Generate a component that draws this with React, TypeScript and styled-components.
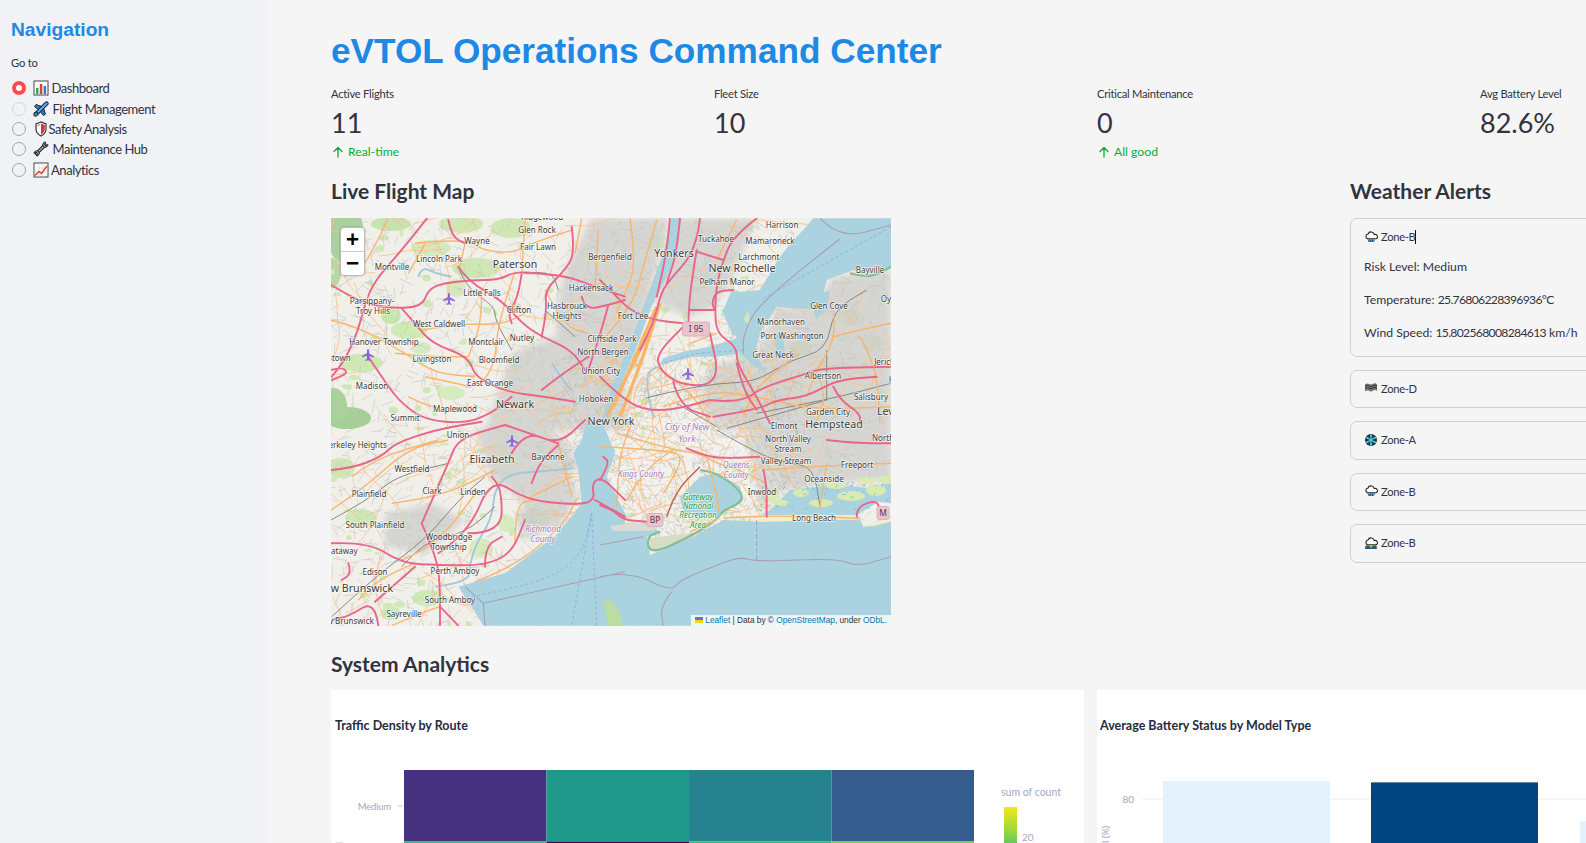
import React from "react";
import styled, { createGlobalStyle } from "styled-components";

const SANS = `"Lato", "Noto Sans", sans-serif`;
const ARIAL = `"Liberation Sans", Arial, sans-serif`;
const MAPF = `"Noto Sans", "Open Sans", sans-serif`;

const Global = createGlobalStyle`
  html, body { margin: 0; padding: 0; width: 1586px; height: 843px; overflow: hidden; background: #f5f5f5; }
  #root { width: 1586px; height: 843px; overflow: hidden; }
  * { box-sizing: border-box; }
`;

const Page = styled.div`
  display: flex; width: 1586px; height: 843px; overflow: hidden;
  font-family: ${SANS}; color: #31333f; background: #f5f5f5;
`;
const Sidebar = styled.aside`
  flex: 0 0 268px; background: #f0f2f6; padding: 19px 11px 0;
`;
const NavTitle = styled.h2`
  margin: 0; font: bold 19.2px/22px ${ARIAL}; color: #1e88e5;
`;
const GoTo = styled.div`
  margin-top: 15px; font-size: 11.2px; letter-spacing: -0.2px; line-height: 14px;
`;
const RadioList = styled.div`
  display: flex; flex-direction: column; margin-top: 8px;
`;
const RadioRow = styled.div`
  display: flex; align-items: center; height: 20.4px; font-size: 13px; letter-spacing: -0.45px; white-space: nowrap;
`;
const RadioDot = styled.span<{ $on?: boolean; $faint?: boolean }>`
  width: 14px; height: 14px; border-radius: 50%; flex: none; margin: 0 8px 0 1px;
  ${(p) => p.$on ? "background:#fff; border:4px solid #ff4b4b;" : `background:#f0f2f6; border:1px solid ${p.$faint ? "#d4d6dc" : "#a3a5ad"};`}
`;
const RadioIcon = styled.svg<{ $gap: number }>`
  width: 16px; height: 16px; flex: none; margin-left: -1px; margin-right: ${(p) => p.$gap}px;
`;
const Main = styled.main`
  flex: 1; min-width: 0; padding: 29px 0 0 63px; overflow: hidden;
`;
const Title = styled.h1`
  margin: 0; font: bold 35.2px/44px ${ARIAL}; color: #1e88e5; white-space: nowrap;
`;
const Metrics = styled.div`
  display: grid; grid-template-columns: repeat(4, 370px); column-gap: 13px; margin-top: 13px; width: 1519px;
`;
const Metric = styled.div`
  display: flex; flex-direction: column; height: 78px;
`;
const MetricLabel = styled.div`
  font-size: 11.2px; letter-spacing: -0.25px; line-height: 16px;
`;
const MetricValue = styled.div`
  font-size: 27px; line-height: 36px; margin-top: 3px;
`;
const Delta = styled.div`
  display: flex; align-items: center; gap: 3px; font-size: 12.2px; line-height: 18px; margin-top: 2px; color: #09ab3b;
`;
const MapRow = styled.div`
  display: grid; grid-template-columns: 1006px 400px; column-gap: 13px; margin-top: 12px; width: 1419px;
`;
const Section = styled.h3`
  margin: 0; font-size: 21px; line-height: 30px; font-weight: 700; color: #31333f; white-space: nowrap;
`;
const MapFrame = styled.div`
  position: relative; width: 560px; height: 408px; margin-top: 12px; overflow: hidden; background: #f2efe9;
`;
const MapSvg = styled.svg`
  display: block; width: 560px; height: 408px;
`;
const ZoomBox = styled.div`
  position: absolute; left: 9px; top: 9px; width: 25px; display: flex; flex-direction: column;
  background: #fff; border: 1px solid #bbb; border-radius: 4px; box-shadow: 0 0 0 1px rgba(0,0,0,.08);
`;
const ZoomBtn = styled.div<{ $top?: boolean }>`
  height: 23.5px; display: flex; align-items: center; justify-content: center;
  font: bold 21px/24px "DejaVu Sans Mono", "Liberation Mono", monospace; color: #000;
  ${(p) => p.$top && "border-bottom: 1px solid #ccc;"}
`;
const Attribution = styled.div`
  position: absolute; right: 0; bottom: 0; height: 11px; padding: 0 4px;
  background: rgba(255,255,255,.8); font: 8.3px/11px ${ARIAL}; color: #333; white-space: nowrap;
`;
const AttrLink = styled.span`
  color: #0078a8;
`;
const Flag = styled.svg`
  display: inline-block; width: 8px; height: 6px; margin-right: 2px;
`;
const Alerts = styled.div`
  display: flex; flex-direction: column; gap: 13px; margin-top: 12px;
`;
const Expander = styled.div`
  border: 1px solid #d0d0d3; border-radius: 7px; padding: 0 13px;
`;
const ExpHead = styled.div`
  display: flex; align-items: center; height: 36.5px; padding-bottom: 1px; font-size: 11.2px; letter-spacing: -0.3px; white-space: nowrap;
`;
const ExpIcon = styled.svg`
  width: 14px; height: 14px; flex: none; margin-right: 3px;
`;
const Caret = styled.span`
  display: inline-block; width: 1px; height: 14px; background: #111; margin-left: -1px;
`;
const ExpBody = styled.div`
  display: flex; flex-direction: column; padding: 0 0 6px; margin-top: -6px;
`;
const ExpLine = styled.div`
  font-size: 12.2px; line-height: 33.4px; white-space: nowrap;
`;
const Digits = styled.span`
  letter-spacing: -0.7px;
`;
const SystemHead = styled(Section)`
  margin-top: 23px;
`;
const Charts = styled.div`
  display: grid; grid-template-columns: repeat(2, 753px); column-gap: 13px; margin-top: 11px; width: 1519px;
`;
const ChartCard = styled.div`
  position: relative; background: #fff; height: 300px; overflow: hidden;
`;
const ChartTitle = styled.div<{ $x: number }>`
  position: absolute; left: ${(p) => p.$x}px; top: 27px; font-size: 12.5px; line-height: 18px; font-weight: 700; color: #262b3d; white-space: nowrap;
`;
const ChartSvg = styled.svg`
  display: block; position: absolute; left: 0; top: 0; width: 753px; height: 300px;
`;

/* ---------- map data, traced per quadrant of the reference ---------- */
const Q: Record<string, [number, number]> = { a: [-6, -8], b: [269, -8], c: [269, 202], d: [-6, 202] };
const xy = (k: string, a: number[]) => {
  const [ox, oy] = Q[k];
  const out: Array<[number, number]> = [];
  for (let i = 0; i < a.length; i += 2) out.push([a[i] / 3 + ox, a[i + 1] / 3 + oy]);
  return out;
};
const pts = (k: string, a: number[]) => xy(k, a).map(([x, y]) => `${x.toFixed(1)},${y.toFixed(1)}`).join(" ");
const smoothList = (p: Array<[number, number]>) => {
  if (p.length < 3) return `M${p.map(([x, y]) => `${x.toFixed(1)} ${y.toFixed(1)}`).join("L")}`;
  let d = `M${p[0][0].toFixed(1)} ${p[0][1].toFixed(1)}`;
  for (let i = 1; i < p.length - 1; i++) {
    const mx = (p[i][0] + p[i + 1][0]) / 2;
    const my = (p[i][1] + p[i + 1][1]) / 2;
    d += `Q${p[i][0].toFixed(1)} ${p[i][1].toFixed(1)} ${mx.toFixed(1)} ${my.toFixed(1)}`;
  }
  const l = p[p.length - 1];
  return d + `L${l[0].toFixed(1)} ${l[1].toFixed(1)}`;
};
type Line = [string, number[]];
const joined = (ls: Line[]) => ls.map(([k, a]) => smoothList(xy(k, a))).join("");

const pink: Line[] = [
  ["a", [18,225,70,255,120,280,200,295,290,290,310,240,350,220,440,210,520,210,570,185,640,190,730,200,810,230,900,260]],
  ["a", [310,20,240,110,150,210,120,280,100,360,60,450,20,500]],
  ["a", [230,295,270,340,320,400,430,440,450,500,540,545,660,560,750,575]],
  ["a", [400,170,430,215,530,270,590,340,650,380,740,420,780,480]],
  ["a", [130,440,190,530,230,580,300,630,420,640,500,610,560,560]],
  ["a", [370,30,380,80,420,100]],
  ["a", [740,50,750,130,720,180,660,240,665,300,650,380]],
  ["a", [590,190,580,260,550,310,560,340]],
  ["a", [770,260,780,300,850,285,900,270]],
  ["a", [850,285,830,360,790,480]],
  ["a", [650,540,700,500,790,440]],
  ["a", [18,480,50,470,70,490,20,510]],
  ["b", [300,25,290,120,200,220,180,260,160,340,120,420]],
  ["b", [470,25,400,80,370,150,350,220,345,300,350,370,410,410,410,460,470,560,510,640]],
  ["b", [290,125,370,150]],
  ["b", [400,240,350,240,335,280,345,300]],
  ["b", [270,300,345,300]],
  ["b", [290,120,270,240,265,340]],
  ["b", [0,210,50,260,90,300,160,330,250,340]],
  ["b", [330,370,340,420,350,460,345,510,300,530,220,515,170,465,180,420,250,350]],
  ["b", [330,570,420,580,490,530,610,495,660,475,873,470]],
  ["b", [340,620,470,600,530,570,620,560,710,510,830,500]],
  ["b", [410,460,430,540,470,600]],
  ["b", [700,530,720,570,780,610,780,640]],
  ["b", [210,25,200,130,170,260]],
  ["b", [240,25,230,130,200,220]],
  ["b", [0,500,60,560,130,600,220,600,330,570]],
  ["b", [220,515,240,590,330,620]],
  ["c", [260,85,320,110,390,115,480,110]],
  ["c", [490,150,500,190,500,290]],
  ["c", [680,60,770,70,873,70]],
  ["c", [770,290,770,260,830,240,840,270]],
  ["c", [0,255,40,270,70,300,140,305]],
  ["c", [0,180,30,130,10,110]],
  ["d", [18,370,130,365,230,430,340,435,475,437,560,400,600,300]],
  ["d", [18,150,80,145,170,110,210,70,330,30,470,5]],
  ["d", [290,310,370,130,400,55,540,15]],
  ["d", [290,310,330,400,345,480,345,620]],
  ["d", [340,400,430,340,500,170,600,240,760,255,810,240,800,190,830,170,900,240]],
  ["d", [430,340,530,340,530,210,500,170]],
  ["d", [480,440,480,380,530,350]],
  ["d", [620,190,640,130,700,75]],
  ["d", [560,100,600,30,700,75,780,0]],
  ["d", [540,15,700,70]],
  ["d", [810,240,900,290]],
  ["d", [160,617,150,540,70,590,18,600]],
  ["d", [150,545,270,440]],
  ["d", [345,560,400,617]],
  ["d", [70,430,80,460,50,480]],
];
const orange: Line[] = [
  ["a", [190,25,150,110,100,190]], ["a", [300,100,270,155,250,190]],
  ["a", [270,100,420,85,470,120,560,130,620,100,740,60]], ["a", [420,100,405,170]],
  ["a", [470,250,470,340,430,440]], ["a", [290,360,420,340,530,345,600,310]],
  ["a", [210,430,300,440,430,440]], ["a", [570,185,520,330,510,460,470,520]],
  ["a", [18,330,100,350,240,430,330,490,450,500]], ["a", [600,30,590,190]],
  ["a", [770,25,750,130]], ["a", [820,60,810,230]], ["a", [660,240,720,350,790,370]],
  ["a", [300,500,440,530]], ["a", [250,560,320,600,440,590]],
  ["b", [90,25,110,170,70,260,50,310]], ["b", [170,30,130,170,100,280,0,400]],
  ["b", [410,30,350,150]], ["b", [700,300,710,380,650,480,620,560]],
  ["b", [873,340,780,360,700,380]], ["b", [600,430,470,520,430,620]],
  ["b", [660,510,680,570,640,650]], ["b", [780,380,830,470,840,640]],
  ["b", [270,400,350,370]], ["b", [170,470,270,540,330,640]],
  ["b", [190,590,330,540,470,560,640,600,873,590]],
  ["c", [50,40,220,90,300,100,350,130,420,150,500,190]], ["c", [320,110,350,220,360,290]],
  ["c", [490,150,620,140,873,130]], ["c", [680,130,660,260]], ["c", [100,0,60,80,50,260]],
  ["c", [0,80,220,90,250,120,190,220]], ["c", [370,295,480,285,780,295]],
  ["c", [350,300,270,335]], ["c", [220,90,150,130,80,240]],
  ["d", [18,270,110,210,250,85,370,60]], ["d", [80,170,150,115,340,60]],
  ["d", [200,250,350,230,510,150]], ["d", [230,420,330,380,460,210]],
  ["d", [270,430,170,470,100,540]], ["d", [570,370,570,250,630,240]],
  ["d", [450,485,570,440,720,310,755,235]], ["d", [200,617,300,575,345,560]],
  ["d", [700,70,740,230]], ["d", [740,170,620,230]],
];
const manhattan: Line[] = [
  ["b", [40,590,80,500,170,290]], ["b", [60,620,120,470,180,280]], ["b", [20,620,70,520,140,380]],
];
const rail: Line[] = [
  ["b", [135,565,210,545,350,520,470,515,570,450,680,420,700,300,800,240]],
  ["b", [230,580,350,650]], ["b", [680,420,680,570]], ["b", [470,610,680,570,873,520]],
  ["b", [380,655,680,570]],
  ["d", [18,300,130,240,210,170,370,130]], ["d", [20,590,150,470,300,360,410,230,480,170]],
  ["d", [230,440,300,360,420,340,510,260]],
  ["c", [350,30,470,100,560,130,640,140,660,260]],
  ["a", [400,170,420,230,510,290,510,330,560,420]], ["a", [600,190,680,180,700,240]],
  ["a", [660,300,750,380]],
];
const border: Line[] = [
  ["b", [660,25,720,87,873,45]], ["b", [720,87,485,268,430,370,430,430]],
  ["c", [0,470,85,452,215,515,235,482,375,425,425,412,470,425,715,415,770,440,873,410]],
  ["c", [215,515,180,560,190,617]], ["c", [0,375,130,350]],
  ["d", [475,550,900,455]], ["d", [475,550,480,617]], ["d", [420,500,475,550]],
];
const ferry: Line[] = [
  ["b", [873,50,485,268]], ["b", [430,420,370,425,280,430,190,460]],
  ["d", [800,280,740,617]], ["d", [800,280,815,617]], ["d", [440,530,650,490,770,410,800,280]],
];

const water: Line[] = [
  ["b", [640,25,610,60,580,90,540,140,480,240,420,245,395,240,370,300,410,385,330,410,250,425,190,445,175,470,200,460,280,440,350,440,420,430,460,465,500,490,465,430,480,370,530,290,640,300,650,330,680,210,760,180,873,175,873,25]],
  ["b", [215,25,190,130,130,290,90,400,40,520,0,640,20,650,60,530,110,410,150,300,210,180,245,25]],
  ["d", [510,617,475,617,440,560,400,500,450,485,540,460,620,400,700,340,770,250,760,150,745,100,770,60,785,0,830,0,870,100,845,170,900,280,900,300,900,617]],
  ["c", [0,270,30,300,60,310,140,310,180,335,140,350,150,405,290,345,370,300,480,305,780,298,790,320,873,290,873,617,0,617]],
  ["c", [300,170,350,160,420,200,430,240,380,270,350,290,250,280,240,230]],
  ["c", [510,270,570,210,700,195,820,205,873,180,873,250,835,245,770,285,480,285]],
  ["b", [520,375,545,365,555,420,530,425]],
  ["b", [650,320,665,250,690,240,680,300]],
  ["b", [365,300,400,380,420,340,395,280]],
];
const rivers: Line[] = [
  ["d", [430,470,440,390,500,300,510,200,560,160,640,155,740,145]],
  ["d", [330,500,400,490,430,470]],
  ["b", [160,620,130,500,170,470]],
  ["a", [280,200,290,170,330,190,380,200]],
  ["a", [680,460,720,520,740,540]],
];
const urban: Line[] = [
  ["b", [470,430,530,290,640,300,700,200,873,180,873,660,340,660,300,560,330,470]],
  ["b", [0,25,210,25,120,360,0,640]],
  ["c", [430,0,873,0,873,180,700,190,560,210,480,260]],
  ["a", [800,25,900,25,900,330,700,460,690,320,720,180]],
  ["a", [560,430,900,300,900,660,480,660]],
  ["b", [230,25,470,25,400,200,330,300,260,320,170,280]],
  ["d", [450,30,620,0,720,60,760,140,600,250,500,170]],
  ["d", [180,280,320,250,420,300,300,400,180,380]],
  ["d", [640,180,740,170,760,230,700,320,600,360,570,300]],
];
const parks: Array<[number, number, number, number, string]> = [
  [14,14,18,32,"#a9d19a"], [0,55,10,15,"#b7d8a5"], [16,200,24,11,"#a4cf96"], [2,188,14,18,"#a9d19a"],
  [60,6,20,7,"#c7e3ae"], [130,6,22,9,"#cfe7b3"], [100,30,20,8,"#d4e9bc"], [145,50,24,10,"#cfe7b3"],
  [78,112,18,9,"#cfeab4"], [60,98,10,8,"#c5e6ae"], [125,70,10,9,"#d4e9bc"], [180,10,20,10,"#cfe7b3"],
  [30,145,22,9,"#cfe7b3"], [120,175,14,7,"#d7ebc0"], [90,130,10,6,"#d7ebc0"], [10,250,14,10,"#cfe7b3"],
  [30,300,16,9,"#cfe7b3"], [205,300,14,9,"#cfe7b3"], [150,330,12,10,"#d7ebc0"], [175,305,8,9,"#d7ebc0"],
  [210,340,8,8,"#a9d19a"], [97,380,16,8,"#cdeab7"], [60,395,10,7,"#cdeab7"], [325,25,9,8,"#cfeab4"],
  [470,130,12,7,"#cfe7b3"], [520,100,14,8,"#d2e8bb"], [475,70,7,4,"#d2e8bb"], [540,125,10,9,"#cfe7b3"],
  [510,150,10,6,"#d2e8bb"], [395,170,8,5,"#d2e8bb"], [370,292,14,16,"#d7ebc0"], [396,268,8,5,"#c6ccb3"],
];
const marsh: Array<[number, number, number, number]> = [
  [450,285,9,3],[490,285,12,4],[520,278,14,5],[545,272,10,6],[470,275,8,4],[505,268,10,3],[440,278,7,5],[535,262,9,3],[555,262,8,4],
];

type Label = [string, number, number, number?, string?];
const BIG = 10.6;
const labels: Label[] = [
  ["Ridgewood",211,-1],["Glen Rock",206,12],["Wayne",146,23],["Fair Lawn",207,29],["Bergenfield",279,39],
  ["Lincoln Park",108,41],["Paterson",184,47,BIG],["Montville",61,49],["Hackensack",260,70],["Little Falls",151,75],
  ["Parsippany-",41,83],["Troy Hills",42,93],["Clifton",188,92],["Hasbrouck",236,88],["Heights",236,98],
  ["West Caldwell",108,106],["Nutley",191,120],["Cliffside Park",281,121],["Hanover Township",53,124],["Montclair",155,124],
  ["North Bergen",272,134],["Livingston",101,141],["Bloomfield",168,142],["Morristown",-2,140],["Union City",270,153],
  ["East Orange",159,165],["Madison",41,168],["Newark",184,187,BIG],["Maplewood",124,191],["Hoboken",265,181],
  ["Summit",74,200],["New York",280,204,BIG],
  ["Harrison",451,7],["Tuckahoe",385,21],["Mamaroneck",439,23],["Yonkers",343,36,BIG],["Larchmont",428,39],
  ["New Rochelle",411,51,BIG],["Bayville",539,52],["Pelham Manor",396,64],["Oyster Bay",570,81],["Glen Cove",498,88],
  ["Fort Lee",302,98],["Manorhaven",450,104],["Port Washington",461,118],["Great Neck",442,137],["Jericho",556,144],
  ["Albertson",492,158],["Hicksville",575,162],["Salisbury",540,179],["Garden City",497,194],["Levittown",570,194,BIG],
  ["Elmont",453,208],["Hempstead",503,207,BIG],
  ["North Valley",457,221],["Stream",457,231],["North Bellmore",570,220],["Valley Stream",455,243],["Freeport",526,247],
  ["Oceanside",493,261],["Inwood",431,274],["Long Beach",483,300],
  ["Union",127,217],["Berkeley Heights",24,227],["Bayonne",217,239],["Elizabeth",161,242,BIG],["Westfield",81,251],
  ["Clark",101,273],["Linden",142,274],["Plainfield",38,276],["South Plainfield",44,307],["Woodbridge",118,319],
  ["Township",118,329],["Piscataway",6,333],["Edison",44,354],["Perth Amboy",124,353],["New Brunswick",24,371,BIG],
  ["South Amboy",119,382],["Sayreville",73,396],["New Brunswick",14,403],
];
const purpleLabels: Label[] = [
  ["City of New",356,209,9],["York",356,221,9],["Queens",405,247,8],["County",405,257,8],["Kings County",310,256,8],
  ["Richmond",212,311,8],["County",212,321,8],
];
const greenLabels: Label[] = [
  ["Gateway",367,279],["National",367,288],["Recreation",367,297],["Area",367,307],
];

const seeded = (seed: number) => {
  let s = seed;
  return () => {
    s = (s * 16807) % 2147483647;
    return (s - 1) / 2147483646;
  };
};
const scatter = (seed: number, n: number, x0: number, y0: number, w: number, h: number, lo: number, hi: number) => {
  const r = seeded(seed);
  const d: string[] = [];
  for (let i = 0; i < n; i++) {
    const x = x0 + r() * w;
    const y = y0 + r() * h;
    const a = r() * Math.PI;
    const l = lo + r() * (hi - lo);
    d.push(`M${x.toFixed(1)} ${y.toFixed(1)}L${(x + Math.cos(a) * l).toFixed(1)} ${(y + Math.sin(a) * l).toFixed(1)}`);
  }
  return d.join("");
};
const walks = (seed: number, n: number, x0: number, y0: number, w: number, h: number, steps: number, len: number) => {
  const r = seeded(seed);
  const d: string[] = [];
  for (let i = 0; i < n; i++) {
    const p: Array<[number, number]> = [[x0 + r() * w, y0 + r() * h]];
    let a = r() * Math.PI * 2;
    for (let s = 0; s < steps; s++) {
      a += (r() - 0.5) * 0.9;
      const [px, py] = p[p.length - 1];
      p.push([px + Math.cos(a) * len, py + Math.sin(a) * len]);
    }
    d.push(smoothList(p));
  }
  return d.join("");
};
const minorStreets = scatter(4242, 2200, 0, 0, 560, 408, 5, 16);
const cityStreets = scatter(777, 1400, 230, 130, 240, 190, 3, 9);
const orangeWalks = walks(99, 130, 0, 0, 560, 408, 5, 13);
const cityOrange = walks(1234, 70, 240, 140, 220, 170, 4, 10);
const greens = (() => {
  const r = seeded(31337);
  const list: Array<[number, number, number, number]> = [];
  for (let i = 0; i < 260; i++) list.push([r() * 560, r() * 408, 1.5 + r() * 4, 1 + r() * 3]);
  return list;
})();
const marshDashes = scatter(555, 40, 430, 262, 130, 32, 2, 4);
const cityGrid = (() => {
  const d: string[] = [];
  for (let i = 0; i < 26; i++) {
    const o = i * 7;
    d.push(`M${240 + o} 200L${300 + o} 310`);
    d.push(`M${240 + o} 310L${340 + o / 2} ${180 + o / 3}`);
  }
  return d.join("");
})();

const PLANE = "M0-6c.7 0 1 .9 1 1.7v2.5l5 3v1.2l-5-1.5v3l1.6 1.2v1L0 5.2-2.6 6v-1L-1 3.8v-3l-5 1.5V1.1l5-3v-2.500C-1-5.100-.7-6 0-6z";

const MapArt = () => (
  <MapSvg viewBox="0 0 560 408">
    <defs>
      <filter id="soft" x="-5%" y="-5%" width="110%" height="110%"><feGaussianBlur stdDeviation="0.5" /></filter>
      <filter id="wide" x="-5%" y="-5%" width="110%" height="110%"><feGaussianBlur stdDeviation="3" /></filter>
    </defs>
    <rect width="560" height="408" fill="#f1efe9" />
    <g filter="url(#soft)">
      {parks.map(([x, y, rx, ry, f], i) => <ellipse key={i} cx={x} cy={y} rx={rx} ry={ry} fill={f} />)}
      {greens.map(([x, y, rx, ry], i) => <ellipse key={i} cx={x} cy={y} rx={rx} ry={ry} fill="#cfeab6" />)}
    </g>
    <g filter="url(#wide)" opacity="0.8">
      {urban.map(([k, a], i) => <polygon key={i} points={pts(k, a)} fill="#cfcfcd" />)}
    </g>
    <g filter="url(#soft)">
      <path d={minorStreets} stroke="#c6c2bb" strokeWidth="0.55" fill="none" />
      <path d={cityStreets} stroke="#b9b6b0" strokeWidth="0.5" fill="none" />
      <path d={cityGrid} stroke="#fff" strokeWidth="0.7" fill="none" opacity="0.5" />
      <path d={orangeWalks} stroke="#f9c48e" strokeWidth="0.9" fill="none" />
      <path d={cityOrange} stroke="#f9bb78" strokeWidth="0.9" fill="none" />
      {water.map(([k, a], i) => <polygon key={i} points={pts(k, a)} fill="#aad3df" />)}
      <path d={joined(rivers)} fill="none" stroke="#a3c6da" strokeWidth="1.8" />
      {marsh.map(([x, y, rx, ry], i) => <ellipse key={i} cx={x} cy={y} rx={rx} ry={ry} fill="#d7eab0" />)}
      <path d={marshDashes} stroke="#63b4ea" strokeWidth="0.7" fill="none" />
      <polygon points={pts("c", [475,300,480,284,770,286,785,298,480,305])} fill="#f3ecc9" />
      <polygon points={pts("c", [30,318,100,308,180,318,160,332,40,334])} fill="#dcdad4" />
      <polygon points={pts("c", [150,395,148,355,280,338,280,350])} fill="#d9dcc4" />
      <polygon points={pts("c", [785,320,873,292,873,305,820,318])} fill="#eef0c9" />
      <polygon points={pts("d", [835,545,860,540,890,590,880,617,850,617,840,570])} fill="#bcdca0" />
      <polygon points={pts("c", [10,550,35,540,70,617,40,617])} fill="#bcdca0" />
      <polygon points={pts("b", [430,330,445,300,450,345])} fill="#cfe8b8" />
      <path d={joined([["c", [300,150,350,155,430,220,420,250,370,270,350,300,280,345,150,405,140,350,180,335]], ["b", [750,190,790,200,830,195,873,170]]])} fill="none" stroke="#7fbf96" strokeWidth="2.2" />
      <path d={joined(border)} fill="none" stroke="#aa9db5" strokeWidth="1.1" />
      <path d={joined(ferry)} fill="none" stroke="#8fa9e8" strokeWidth="0.9" strokeDasharray="3 2.5" />
      <polyline points={pts("c", [470,300,470,420])} fill="none" stroke="#a79fb5" strokeWidth="1" strokeDasharray="5 2" />
      <path d={joined(rail)} fill="none" stroke="#7d7d7d" strokeWidth="0.9" />
      <path d={joined(orange)} fill="none" stroke="#f9b56c" strokeWidth="1.4" />
      <path d={joined(manhattan)} fill="none" stroke="#f7b56a" strokeWidth="3.4" />
      <path d={joined([["c", [200,290,225,215,300,140]]])} fill="none" stroke="#b56a56" strokeWidth="1.5" />
      <path d={joined(pink)} fill="none" stroke="#e9668a" strokeWidth="1.9" strokeLinecap="round" />
    </g>
    <g fontFamily={MAPF} fill="#3b3b3b" textAnchor="middle" stroke="rgba(255,255,255,.7)" strokeWidth="1.5" paintOrder="stroke" strokeLinejoin="round">
      {labels.map(([t, x, y, s], i) => <text key={i} x={x} y={y + 3} fontSize={s ?? 8}>{t}</text>)}
      {purpleLabels.map(([t, x, y, s], i) => <text key={i} x={x} y={y + 3} fontSize={s} fontStyle="italic" fill="#a67fb5">{t}</text>)}
      {greenLabels.map(([t, x, y], i) => <text key={i} x={x} y={y + 3} fontSize="8" fontStyle="italic" fill="#2f9a3f">{t}</text>)}
    </g>
    {([[365, 111, 27, 14, "I 95"], [324, 302, 16, 13, "BP"], [552, 295, 12, 13, "M"]] as Array<[number, number, number, number, string]>).map(([x, y, w, h, t]) => (
      <g key={t}>
        <rect x={x - w / 2} y={y - h / 2} width={w} height={h} rx="2" fill="#e9c4ce" stroke="#d6a9b6" strokeWidth="0.8" />
        <text x={x} y={y + 3} textAnchor="middle" fontSize="8.4" fontFamily={MAPF} fill="#6a2f42">{t}</text>
      </g>
    ))}
    {[[118, 81], [37, 137], [357, 156], [181, 223]].map(([x, y], i) => (
      <path key={i} d={PLANE} transform={`translate(${x} ${y})`} fill="#7a5ce0" opacity="0.9" />
    ))}
  </MapSvg>
);

/* ---------- small emoji drawings ---------- */
const BarEmoji = () => (
  <RadioIcon $gap={2.5} viewBox="0 0 16 16">
    <rect x="1" y="1" width="14" height="14" fill="#fff" stroke="#444" strokeWidth="1" />
    <rect x="3" y="8" width="2.5" height="6" fill="#2fa84f" /><rect x="6.8" y="4" width="2.5" height="10" fill="#e0402f" /><rect x="10.6" y="6" width="2.5" height="8" fill="#2b7fd6" />
  </RadioIcon>
);
const PlaneEmoji = () => (
  <RadioIcon $gap={3.5} viewBox="0 0 16 16">
    <path d="M1.500 5.500 3 3.500l7 2.500-3.500 3.500zM6.500 9.500 10 6l2.500 7-2 1.500z" fill="#2f7fd0" stroke="#14202e" strokeWidth="1" strokeLinejoin="round" />
    <path d="M2.500 13.500 13.500 2.500" stroke="#14202e" strokeWidth="4.200" strokeLinecap="round" />
    <path d="M2.500 13.500 13.500 2.500" stroke="#5aa6e6" strokeWidth="2.400" strokeLinecap="round" />
    <path d="M1 11.500 4.500 11 5 14.500" fill="#2f7fd0" stroke="#14202e" strokeWidth=".8" />
  </RadioIcon>
);
const ShieldEmoji = () => (
  <RadioIcon $gap={-0.5} viewBox="0 0 16 16">
    <path d="M8 1 3 3v5c0 3.200 2.300 5.600 5 7 2.700-1.400 5-3.800 5-7V3z" fill="#fff" stroke="#333" strokeWidth="1.200" />
    <path d="M8 2.500 11.800 4v4c0 2.400-1.700 4.300-3.800 5.500z" fill="#d9333f" />
    <path d="M8 2.500 4.600 4v2z" fill="#e8606a" />
  </RadioIcon>
);
const WrenchEmoji = () => (
  <RadioIcon $gap={3.5} viewBox="0 0 16 16">
    <path d="M3.500 12.500 12 4" stroke="#222" strokeWidth="3.600" strokeLinecap="round" />
    <path d="M3.500 12.500 12 4" stroke="#a5abb1" strokeWidth="1.500" strokeLinecap="round" />
    <path d="M12.500 1a3 3 0 0 0-2.700 4l1.200 1.200a3 3 0 0 0 4-2.700L13 5 11.500 3.500z" fill="#8d9298" stroke="#222" strokeWidth="1" />
    <path d="M3.500 15a3 3 0 0 0 2.700-4L5 9.800a3 3 0 0 0-4 2.700L3 11l1.500 1.500z" fill="#8d9298" stroke="#222" strokeWidth="1" />
  </RadioIcon>
);
const GraphEmoji = () => (
  <RadioIcon $gap={2} viewBox="0 0 16 16">
    <rect x="1" y="1" width="14" height="14" fill="#fff" stroke="#444" strokeWidth="1" />
    <path d="M1 6h14M1 10h14M6 1v14M10 1v14" stroke="#ccc" strokeWidth=".6" />
    <path d="M2 13.500 6 9.500l2.500 2L14 4" fill="none" stroke="#e0402f" strokeWidth="1.500" />
  </RadioIcon>
);

const CloudPath = "M3.500 8.800A2.500 2.500 0 0 1 4 4a3.300 3.300 0 0 1 6.300.6A2.200 2.200 0 0 1 12 8.800z";
const RainIcon = () => (
  <ExpIcon viewBox="0 0 14 14">
    <path d={CloudPath} fill="#fff" stroke="#222" strokeWidth="1.100" />
    <path d="M3.500 9.500h7.500l-1 2.500h-5.500z" fill="#1b5d7a" />
    <path d="M5 10v2M7.300 10v2M9.500 10v2" stroke="#3fa6cf" strokeWidth="1" />
  </ExpIcon>
);
const StormIcon = () => (
  <ExpIcon viewBox="0 0 14 14">
    <path d={CloudPath} fill="#fff" stroke="#222" strokeWidth="1.100" />
    <path d="M1.500 9.500h11l.4 3.500H1z" fill="#1b5d7a" />
    <path d="M7.500 8 5.500 11h1.500l-.8 2 2.600-3H7.200z" fill="#f5c518" />
  </ExpIcon>
);
const FogIcon = () => (
  <ExpIcon viewBox="0 0 14 14">
    <path d="M1 3.500c2-1.400 3-1 4-.5s3 1 4-.2 3-.4 4 .4v6.800c-1-1-3-1.300-4-.3s-3 .8-4 .2-2.500-.7-4 .4z" fill="#777" />
    <path d="M1 5.200c2-1.300 3-.9 4-.4s3 .8 4-.2 3-.3 4 .4M1 7.500c2-1.300 3-.9 4-.4s3 .8 4-.2 3-.3 4 .4" fill="none" stroke="#222" strokeWidth=".8" />
  </ExpIcon>
);
const SnowIcon = () => (
  <ExpIcon viewBox="0 0 14 14">
    <circle cx="7" cy="7" r="6" fill="#1b3a44" />
    <path d="M7 1.500v11M2.200 4.200l9.600 5.600M11.800 4.200 2.200 9.800" stroke="#58c9e0" strokeWidth="1.300" />
    <circle cx="7" cy="3" r="1.100" fill="#58c9e0" /><circle cx="7" cy="11" r="1.100" fill="#58c9e0" />
    <circle cx="3.400" cy="5" r="1" fill="#58c9e0" /><circle cx="10.600" cy="9" r="1" fill="#58c9e0" />
    <circle cx="10.600" cy="5" r="1" fill="#58c9e0" /><circle cx="3.400" cy="9" r="1" fill="#58c9e0" />
  </ExpIcon>
);

const UpArrow = () => (
  <svg width="14" height="14" viewBox="0 0 14 14" fill="none" stroke="#09ab3b" strokeWidth="1.300" strokeLinecap="round">
    <path d="M7 12V2.500M3 6.500l4-4 4 4" />
  </svg>
);

const nav: Array<[React.ComponentType, string, boolean?, boolean?]> = [
  [BarEmoji, "Dashboard", true],
  [PlaneEmoji, "Flight Management", false, true],
  [ShieldEmoji, "Safety Analysis"],
  [WrenchEmoji, "Maintenance Hub"],
  [GraphEmoji, "Analytics"],
];
const metrics: Array<[string, string, string?]> = [
  ["Active Flights", "11", "Real-time"],
  ["Fleet Size", "10"],
  ["Critical Maintenance", "0", "All good"],
  ["Avg Battery Level", "82.6%"],
];
const zones: Array<[React.ComponentType, string]> = [
  [FogIcon, "Zone-D"],
  [SnowIcon, "Zone-A"],
  [RainIcon, "Zone-B"],
  [StormIcon, "Zone-B"],
];

const AXIS = "#a3a8c2";
const AXF = SANS;

export default function App() {
  return (
    <Page>
      <Global />
      <Sidebar>
        <NavTitle>Navigation</NavTitle>
        <GoTo>Go to</GoTo>
        <RadioList>
          {nav.map(([Ic, t, on, faint]) => (
            <RadioRow key={t}>
              <RadioDot $on={on} $faint={faint} />
              <Ic />
              <span>{t}</span>
            </RadioRow>
          ))}
        </RadioList>
      </Sidebar>
      <Main>
        <Title>eVTOL Operations Command Center</Title>
        <Metrics>
          {metrics.map(([l, v, d]) => (
            <Metric key={l}>
              <MetricLabel>{l}</MetricLabel>
              <MetricValue>{v}</MetricValue>
              {d && <Delta><UpArrow />{d}</Delta>}
            </Metric>
          ))}
        </Metrics>
        <MapRow>
          <div>
            <Section>Live Flight Map</Section>
            <MapFrame>
              <MapArt />
              <ZoomBox>
                <ZoomBtn $top>+</ZoomBtn>
                <ZoomBtn>−</ZoomBtn>
              </ZoomBox>
              <Attribution>
                <Flag viewBox="0 0 8 6"><rect width="8" height="3" fill="#4c7be1" /><rect y="3" width="8" height="3" fill="#ffd500" /></Flag>
                <AttrLink>Leaflet</AttrLink> | Data by © <AttrLink>OpenStreetMap</AttrLink>, under <AttrLink>ODbL.</AttrLink>
              </Attribution>
            </MapFrame>
          </div>
          <div>
            <Section>Weather Alerts</Section>
            <Alerts>
              <Expander>
                <ExpHead><RainIcon />Zone-B<Caret /></ExpHead>
                <ExpBody>
                  <ExpLine>Risk Level: Medium</ExpLine>
                  <ExpLine>Temperature: <Digits>25.76806228396936°C</Digits></ExpLine>
                  <ExpLine>Wind Speed: <Digits>15.802568008284613</Digits> km/h</ExpLine>
                </ExpBody>
              </Expander>
              {zones.map(([Ic, t], i) => (
                <Expander key={i}>
                  <ExpHead><Ic />{t}</ExpHead>
                </Expander>
              ))}
            </Alerts>
          </div>
        </MapRow>
        <SystemHead>System Analytics</SystemHead>
        <Charts>
          <ChartCard>
            <ChartSvg viewBox="0 0 753 300">
              <rect x="73" y="80" width="142.500" height="71.500" fill="#46327e" />
              <rect x="215.500" y="80" width="142.500" height="71.500" fill="#1f9a8a" />
              <rect x="358" y="80" width="142.500" height="71.500" fill="#26828e" />
              <rect x="500.500" y="80" width="142.500" height="71.500" fill="#365c8d" />
              <rect x="73" y="151.500" width="142.500" height="100" fill="#35b779" />
              <rect x="215.500" y="151.500" width="142.500" height="100" fill="#440154" />
              <rect x="358" y="151.500" width="142.500" height="100" fill="#35b779" />
              <rect x="500.500" y="151.500" width="142.500" height="100" fill="#6ece58" />
              <path d="M67 116h5" stroke="#ccc" />
              <text x="60" y="120" textAnchor="end" fontFamily={AXF} fontSize="9.500" letterSpacing="-.2" fill={AXIS}>Medium</text>
              <text transform="translate(12 193) rotate(-90)" fontFamily={AXF} fontSize="9.500" fill={AXIS}>Risk Level</text>
              <text x="670" y="106" fontFamily={AXF} fontSize="10.500" fill={AXIS}>sum of count</text>
              <defs>
                <linearGradient id="vir" x1="0" y1="0" x2="0" y2="1">
                  <stop offset="0" stopColor="#f4e61e" /><stop offset="0.22" stopColor="#a2da37" /><stop offset="0.42" stopColor="#49c16d" /><stop offset="0.7" stopColor="#26828e" /><stop offset="1" stopColor="#440154" />
                </linearGradient>
              </defs>
              <rect x="673" y="117" width="13" height="100" fill="url(#vir)" />
              <text x="691" y="151" fontFamily={AXF} fontSize="10" fill={AXIS}>20</text>
            </ChartSvg>
            <ChartTitle $x={4}>Traffic Density by Route</ChartTitle>
          </ChartCard>
          <ChartCard>
            <ChartSvg viewBox="0 0 753 300">
              <path d="M45 109H753" stroke="#eee" />
              <rect x="66" y="91" width="167" height="200" fill="#e3f2fd" />
              <rect x="274" y="92.500" width="167" height="200" fill="#004481" />
              <rect x="274" y="92" width="167" height="1" fill="#5f88ad" />
              <rect x="483" y="131" width="167" height="200" fill="#e3f2fd" />
              <text x="37" y="113" textAnchor="end" fontFamily={AXF} fontSize="10" fill={AXIS}>80</text>
              <text transform="translate(12 205) rotate(-90)" fontFamily={AXF} fontSize="9.500" fill={AXIS}>Battery Level (%)</text>
            </ChartSvg>
            <ChartTitle $x={3}>Average Battery Status by Model Type</ChartTitle>
          </ChartCard>
        </Charts>
      </Main>
    </Page>
  );
}
